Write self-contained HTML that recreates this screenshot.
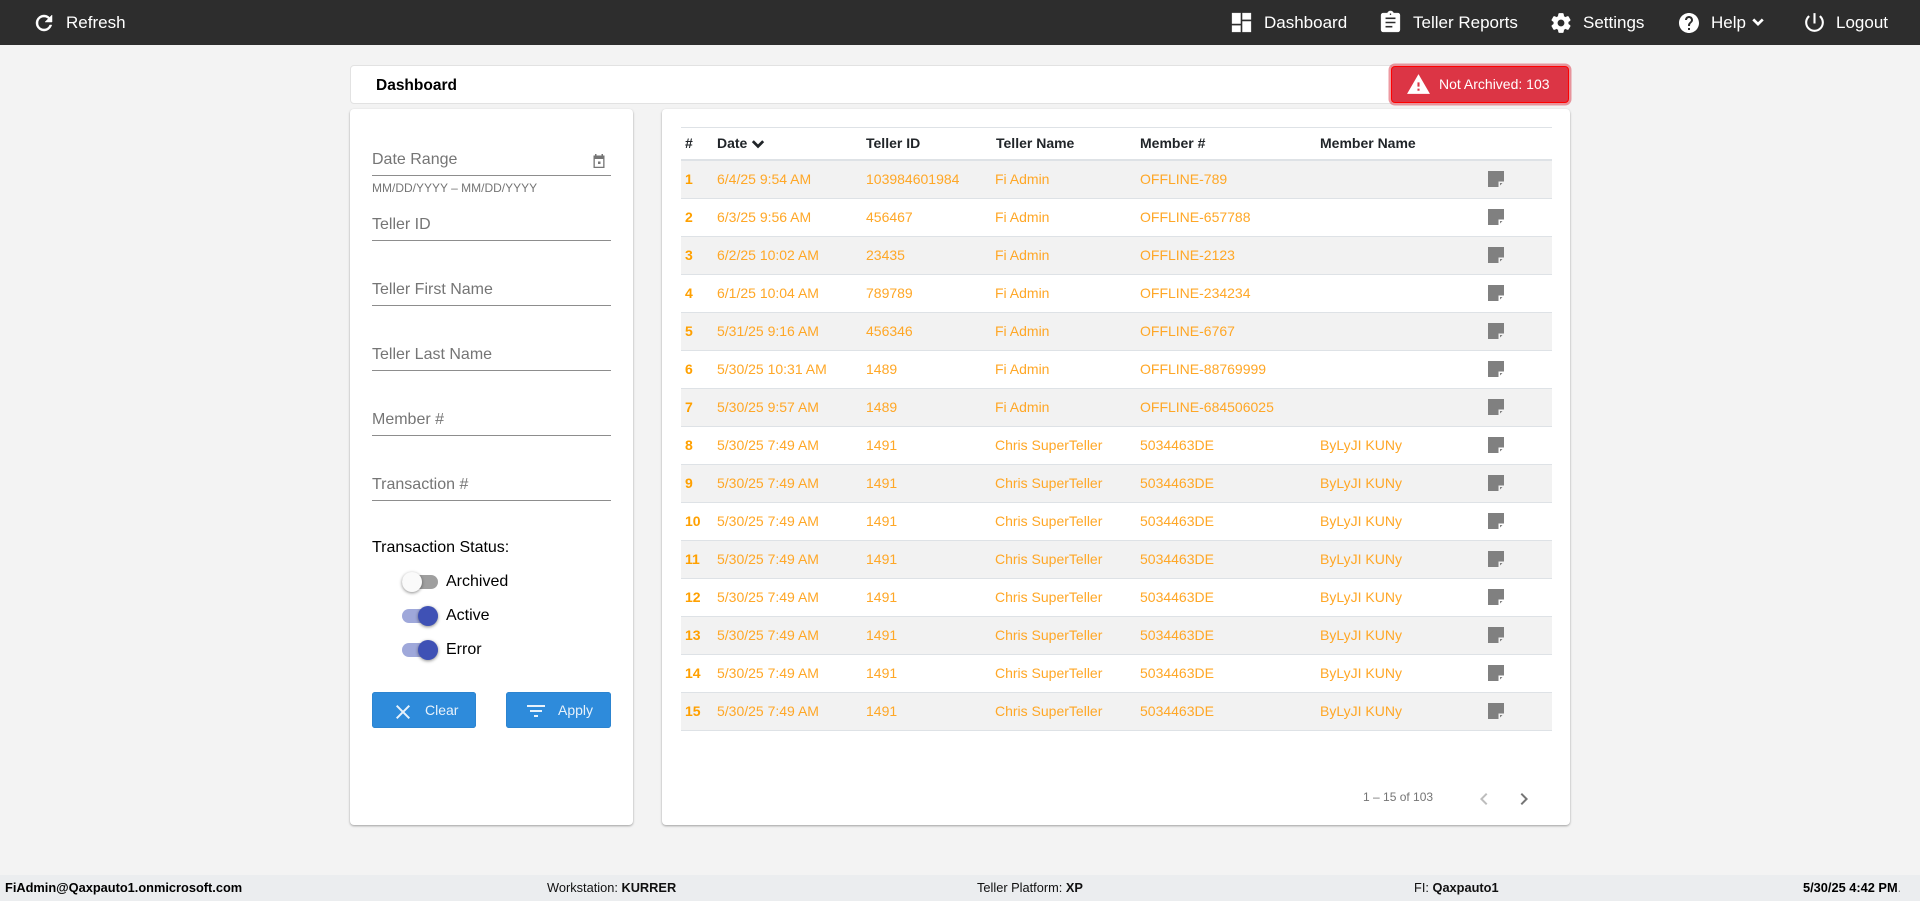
<!DOCTYPE html>
<html lang="en"><head><meta charset="utf-8"><title>Dashboard</title>
<style>
*{box-sizing:border-box}
html,body{margin:0;padding:0}
body{width:1920px;height:901px;overflow:hidden;position:relative;background:#f3f3f3;font-family:"Liberation Sans",Arial,sans-serif;color:#000}
.a{position:absolute;white-space:nowrap}
#nav{left:0;top:0;width:1920px;height:45px;background:#2d2d2d}
.n{color:#fff;font-size:17px;line-height:20px;top:13px}
.i{position:absolute;fill:#fff;stroke:#fff;stroke-width:.5}
#title{left:350px;top:65px;width:1042px;height:39px;background:#fff;border:1px solid #e2e2e2;border-radius:4px 0 0 4px}
#t2{left:376px;top:77px;font-weight:bold;font-size:15.5px;line-height:18px;color:#000}
#alert{left:1391px;top:66px;width:178px;height:37px;background:#dc3545;border:1px solid #f00;border-radius:4px;box-shadow:0 0 0 2.5px rgba(220,53,69,.5)}
#alertT{left:1439px;top:76px;color:#fff;font-size:14px;line-height:17px}
.card{background:#fff;border-radius:4px;box-shadow:0 1px 2px rgba(0,0,0,.35)}
.lb{left:372px;color:#757575;font-size:16px;line-height:20px}
.ul{left:372px;width:239px;height:1px;background:#8d8d8d}
.tr{left:402px;width:36px;height:14px;border-radius:7px}
.th{width:20px;height:20px;border-radius:50%;box-shadow:0 1px 3px rgba(0,0,0,.45)}
.tl{left:446px;font-size:16px;line-height:20px;color:#000}
.btn{top:692px;height:36px;background:#2e8bdb;border-radius:3px;box-shadow:0 0 0 .5px #2a7ec6 inset}
.bt{top:702px;color:#e8f2fb;font-size:14px;line-height:17px}
.h{top:135px;font-weight:bold;font-size:14px;line-height:17px;color:#212529}
.row{position:absolute;left:681px;width:871px;height:38px;border-bottom:1px solid #dee2e6;color:#ffa726;font-size:14px;line-height:37px}
.row.s{background:#f2f2f2}
.row span{position:absolute;top:0;white-space:nowrap}
.row b{position:absolute;top:0;left:4px;color:#ffa000}
.c2{left:36px}.c3{left:185px}.c4{left:314px}.c5{left:459px}.c6{left:639px}
.row svg{position:absolute;left:807px;top:10px}
#foot{left:0;top:875px;width:1920px;height:26px;background:#ebedef}
.f{top:880px;font-size:12.8px;line-height:16px;color:#111}
</style></head><body>

<div class="a" id="nav"></div>
<svg class="i" style="left:32px;top:11px" width="24" height="24" viewBox="0 0 24 24"><path d="M17.65 6.35C16.2 4.9 14.21 4 12 4c-4.42 0-7.99 3.58-7.99 8s3.57 8 7.99 8c3.73 0 6.84-2.55 7.73-6h-2.08c-.82 2.33-3.04 4-5.65 4-3.31 0-6-2.69-6-6s2.69-6 6-6c1.66 0 3.14.69 4.22 1.78L13 11h7V4l-2.35 2.35z"/></svg>
<div class="a n" style="left:66px">Refresh</div>

<svg class="i" style="left:1229px;top:10px" width="25" height="25" viewBox="0 0 24 24"><path d="M3 13h8V3H3v10zm0 8h8v-6H3v6zm10 0h8V11h-8v10zm0-18v6h8V3h-8z"/></svg>
<div class="a n" style="left:1264px">Dashboard</div>
<svg class="i" style="left:1378px;top:10px" width="25" height="25" viewBox="0 0 24 24"><path d="M19 3h-4.18C14.4 1.84 13.3 1 12 1c-1.3 0-2.4.84-2.82 2H5c-1.1 0-2 .9-2 2v14c0 1.1.9 2 2 2h14c1.1 0 2-.9 2-2V5c0-1.1-.9-2-2-2zm-7 0c.55 0 1 .45 1 1s-.45 1-1 1-1-.45-1-1 .45-1 1-1zm2 14H7v-2h7v2zm3-4H7v-2h10v2zm0-4H7V7h10v2z"/></svg>
<div class="a n" style="left:1413px">Teller Reports</div>
<svg class="i" style="left:1549px;top:11px" width="24" height="24" viewBox="0 0 24 24"><path d="M19.14 12.94c.04-.3.06-.61.06-.94 0-.32-.02-.64-.07-.94l2.03-1.58c.18-.14.23-.41.12-.61l-1.92-3.32c-.12-.22-.37-.29-.59-.22l-2.39.96c-.5-.38-1.03-.7-1.62-.94l-.36-2.54c-.04-.24-.24-.41-.48-.41h-3.84c-.24 0-.43.17-.47.41l-.36 2.54c-.59.24-1.13.57-1.62.94l-2.39-.96c-.22-.08-.47 0-.59.22L2.74 8.87c-.12.21-.08.47.12.61l2.03 1.58c-.05.3-.09.63-.09.94s.02.64.07.94l-2.03 1.58c-.18.14-.23.41-.12.61l1.92 3.32c.12.22.37.29.59.22l2.39-.96c.5.38 1.03.7 1.62.94l.36 2.54c.05.24.24.41.48.41h3.84c.24 0 .44-.17.47-.41l.36-2.54c.59-.24 1.13-.56 1.62-.94l2.39.96c.22.08.47 0 .59-.22l1.92-3.32c.12-.22.07-.47-.12-.61l-2.01-1.58zM12 15.6c-1.98 0-3.6-1.62-3.6-3.6s1.62-3.6 3.6-3.6 3.6 1.62 3.6 3.6-1.62 3.6-3.6 3.6z"/></svg>
<div class="a n" style="left:1583px">Settings</div>
<svg class="i" style="left:1677px;top:11px" width="24" height="24" viewBox="0 0 24 24"><path d="M12 2C6.48 2 2 6.48 2 12s4.48 10 10 10 10-4.48 10-10S17.52 2 12 2zm1 17h-2v-2h2v2zm2.07-7.75l-.9.92C13.45 12.9 13 13.5 13 15h-2v-.5c0-1.1.45-2.1 1.17-2.83l1.24-1.26c.37-.36.59-.86.59-1.41 0-1.1-.9-2-2-2s-2 .9-2 2H8c0-2.21 1.79-4 4-4s4 1.79 4 4c0 .88-.36 1.68-.93 2.25z" stroke="none"/></svg>
<div class="a n" style="left:1711px">Help</div>
<svg class="i" style="left:1748px;top:12px" width="20" height="20" viewBox="0 0 24 24"><path d="M7.41 8.59L12 13.17l4.59-4.58L18 10l-6 6-6-6z" stroke-width="1.2"/></svg>
<svg class="i" style="left:1802px;top:10px" width="25" height="25" viewBox="0 0 24 24"><path d="M13 3h-2v10h2V3zm4.83 2.17l-1.42 1.42C17.99 7.86 19 9.81 19 12c0 3.87-3.13 7-7 7s-7-3.13-7-7c0-2.19 1.01-4.14 2.58-5.42L6.17 5.17C4.23 6.82 3 9.26 3 12c0 4.97 4.03 9 9 9s9-4.03 9-9c0-2.74-1.23-5.18-3.17-6.83z" stroke="none"/></svg>
<div class="a n" style="left:1836px">Logout</div>

<div class="a" id="title"></div>
<div class="a" id="t2">Dashboard</div>
<div class="a" id="alert"></div>
<svg class="a" style="left:1406px;top:72px" width="25" height="25" viewBox="0 0 24 24"><path fill="#fff" d="M1 21h22L12 2 1 21zm12-3h-2v-2h2v2zm0-4h-2v-4h2v4z"/></svg>
<div class="a" id="alertT">Not Archived: 103</div>

<div class="a card" style="left:350px;top:109px;width:283px;height:716px"></div>
<div class="a lb" style="top:150px">Date Range</div>
<svg class="a" style="left:591px;top:153px" width="16" height="16" viewBox="0 0 16 16"><path fill="#757575" d="M4 1h1.500v1.500h5V1H12v1.500h1.500V15h-11V2.500H4zM3.800 6v7.700h8.400V6zM7 8.500h2.500V11H7z" fill-rule="evenodd"/></svg>
<div class="a ul" style="top:175px"></div>
<div class="a" style="left:372px;top:181px;font-size:12px;line-height:15px;color:#757575">MM/DD/YYYY – MM/DD/YYYY</div>
<div class="a lb" style="top:215px">Teller ID</div><div class="a ul" style="top:240px"></div>
<div class="a lb" style="top:280px">Teller First Name</div><div class="a ul" style="top:305px"></div>
<div class="a lb" style="top:345px">Teller Last Name</div><div class="a ul" style="top:370px"></div>
<div class="a lb" style="top:410px">Member #</div><div class="a ul" style="top:435px"></div>
<div class="a lb" style="top:475px">Transaction #</div><div class="a ul" style="top:500px"></div>

<div class="a" style="left:372px;top:538px;font-size:16px;line-height:20px">Transaction Status:</div>
<div class="a tr" style="top:575px;background:#9f9f9f"></div><div class="a th" style="left:402px;top:572px;background:#fafafa"></div><div class="a tl" style="top:572px">Archived</div>
<div class="a tr" style="top:609px;background:#9fa8da"></div><div class="a th" style="left:418px;top:606px;background:#3f51b5"></div><div class="a tl" style="top:606px">Active</div>
<div class="a tr" style="top:643px;background:#9fa8da"></div><div class="a th" style="left:418px;top:640px;background:#3f51b5"></div><div class="a tl" style="top:640px">Error</div>

<div class="a btn" style="left:372px;width:104px"></div>
<svg class="a" style="left:391px;top:700px" width="24" height="24" viewBox="0 0 24 24"><path fill="#e8f2fb" d="M19 6.410L17.590 5 12 10.590 6.410 5 5 6.410 10.590 12 5 17.590 6.410 19 12 13.410 17.590 19 19 17.590 13.410 12z"/></svg>
<div class="a bt" style="left:425px">Clear</div>
<div class="a btn" style="left:506px;width:105px"></div>
<svg class="a" style="left:524px;top:699px" width="24" height="24" viewBox="0 0 24 24"><path fill="#e8f2fb" d="M10 18h4v-2h-4v2zM3 6v2h18V6H3zm3 7h12v-2H6v2z"/></svg>
<div class="a bt" style="left:558px">Apply</div>

<div class="a card" style="left:662px;top:109px;width:908px;height:716px"></div>
<div class="a" style="left:681px;top:127px;width:871px;height:1px;background:#dee2e6"></div>
<div class="a" style="left:681px;top:159px;width:871px;height:2px;background:#dee2e6"></div>
<div class="a h" style="left:685px">#</div>
<div class="a h" style="left:717px">Date</div>
<svg class="a" style="left:747px;top:133px" width="22" height="22" viewBox="0 0 24 24"><path fill="#212529" stroke="#212529" d="M7.410 8.590L12 13.170l4.590-4.580L18 10l-6 6-6-6z"/></svg>
<div class="a h" style="left:866px">Teller ID</div>
<div class="a h" style="left:996px">Teller Name</div>
<div class="a h" style="left:1140px">Member #</div>
<div class="a h" style="left:1320px">Member Name</div>

<div class="row s" style="top:161px"><b>1</b><span class="c2">6/4/25 9:54 AM</span><span class="c3">103984601984</span><span class="c4">Fi Admin</span><span class="c5">OFFLINE-789</span><svg width="16" height="16" viewBox="0 0 16 16"><path fill="#808080" d="M0 0h16v10.500h-5.500V16H0z"/><path fill="#808080" d="M12 12h2.500l-2.500 2.500z"/></svg></div>
<div class="row" style="top:199px"><b>2</b><span class="c2">6/3/25 9:56 AM</span><span class="c3">456467</span><span class="c4">Fi Admin</span><span class="c5">OFFLINE-657788</span><svg width="16" height="16" viewBox="0 0 16 16"><path fill="#808080" d="M0 0h16v10.500h-5.500V16H0z"/><path fill="#808080" d="M12 12h2.500l-2.500 2.500z"/></svg></div>
<div class="row s" style="top:237px"><b>3</b><span class="c2">6/2/25 10:02 AM</span><span class="c3">23435</span><span class="c4">Fi Admin</span><span class="c5">OFFLINE-2123</span><svg width="16" height="16" viewBox="0 0 16 16"><path fill="#808080" d="M0 0h16v10.500h-5.500V16H0z"/><path fill="#808080" d="M12 12h2.500l-2.500 2.500z"/></svg></div>
<div class="row" style="top:275px"><b>4</b><span class="c2">6/1/25 10:04 AM</span><span class="c3">789789</span><span class="c4">Fi Admin</span><span class="c5">OFFLINE-234234</span><svg width="16" height="16" viewBox="0 0 16 16"><path fill="#808080" d="M0 0h16v10.500h-5.500V16H0z"/><path fill="#808080" d="M12 12h2.500l-2.500 2.500z"/></svg></div>
<div class="row s" style="top:313px"><b>5</b><span class="c2">5/31/25 9:16 AM</span><span class="c3">456346</span><span class="c4">Fi Admin</span><span class="c5">OFFLINE-6767</span><svg width="16" height="16" viewBox="0 0 16 16"><path fill="#808080" d="M0 0h16v10.500h-5.500V16H0z"/><path fill="#808080" d="M12 12h2.500l-2.500 2.500z"/></svg></div>
<div class="row" style="top:351px"><b>6</b><span class="c2">5/30/25 10:31 AM</span><span class="c3">1489</span><span class="c4">Fi Admin</span><span class="c5">OFFLINE-88769999</span><svg width="16" height="16" viewBox="0 0 16 16"><path fill="#808080" d="M0 0h16v10.500h-5.500V16H0z"/><path fill="#808080" d="M12 12h2.500l-2.500 2.500z"/></svg></div>
<div class="row s" style="top:389px"><b>7</b><span class="c2">5/30/25 9:57 AM</span><span class="c3">1489</span><span class="c4">Fi Admin</span><span class="c5">OFFLINE-684506025</span><svg width="16" height="16" viewBox="0 0 16 16"><path fill="#808080" d="M0 0h16v10.500h-5.500V16H0z"/><path fill="#808080" d="M12 12h2.500l-2.500 2.500z"/></svg></div>
<div class="row" style="top:427px"><b>8</b><span class="c2">5/30/25 7:49 AM</span><span class="c3">1491</span><span class="c4">Chris SuperTeller</span><span class="c5">5034463DE</span><span class="c6">ByLyJI KUNy</span><svg width="16" height="16" viewBox="0 0 16 16"><path fill="#808080" d="M0 0h16v10.500h-5.500V16H0z"/><path fill="#808080" d="M12 12h2.500l-2.500 2.500z"/></svg></div>
<div class="row s" style="top:465px"><b>9</b><span class="c2">5/30/25 7:49 AM</span><span class="c3">1491</span><span class="c4">Chris SuperTeller</span><span class="c5">5034463DE</span><span class="c6">ByLyJI KUNy</span><svg width="16" height="16" viewBox="0 0 16 16"><path fill="#808080" d="M0 0h16v10.500h-5.500V16H0z"/><path fill="#808080" d="M12 12h2.500l-2.500 2.500z"/></svg></div>
<div class="row" style="top:503px"><b>10</b><span class="c2">5/30/25 7:49 AM</span><span class="c3">1491</span><span class="c4">Chris SuperTeller</span><span class="c5">5034463DE</span><span class="c6">ByLyJI KUNy</span><svg width="16" height="16" viewBox="0 0 16 16"><path fill="#808080" d="M0 0h16v10.500h-5.500V16H0z"/><path fill="#808080" d="M12 12h2.500l-2.500 2.500z"/></svg></div>
<div class="row s" style="top:541px"><b>11</b><span class="c2">5/30/25 7:49 AM</span><span class="c3">1491</span><span class="c4">Chris SuperTeller</span><span class="c5">5034463DE</span><span class="c6">ByLyJI KUNy</span><svg width="16" height="16" viewBox="0 0 16 16"><path fill="#808080" d="M0 0h16v10.500h-5.500V16H0z"/><path fill="#808080" d="M12 12h2.500l-2.500 2.500z"/></svg></div>
<div class="row" style="top:579px"><b>12</b><span class="c2">5/30/25 7:49 AM</span><span class="c3">1491</span><span class="c4">Chris SuperTeller</span><span class="c5">5034463DE</span><span class="c6">ByLyJI KUNy</span><svg width="16" height="16" viewBox="0 0 16 16"><path fill="#808080" d="M0 0h16v10.500h-5.500V16H0z"/><path fill="#808080" d="M12 12h2.500l-2.500 2.500z"/></svg></div>
<div class="row s" style="top:617px"><b>13</b><span class="c2">5/30/25 7:49 AM</span><span class="c3">1491</span><span class="c4">Chris SuperTeller</span><span class="c5">5034463DE</span><span class="c6">ByLyJI KUNy</span><svg width="16" height="16" viewBox="0 0 16 16"><path fill="#808080" d="M0 0h16v10.500h-5.500V16H0z"/><path fill="#808080" d="M12 12h2.500l-2.500 2.500z"/></svg></div>
<div class="row" style="top:655px"><b>14</b><span class="c2">5/30/25 7:49 AM</span><span class="c3">1491</span><span class="c4">Chris SuperTeller</span><span class="c5">5034463DE</span><span class="c6">ByLyJI KUNy</span><svg width="16" height="16" viewBox="0 0 16 16"><path fill="#808080" d="M0 0h16v10.500h-5.500V16H0z"/><path fill="#808080" d="M12 12h2.500l-2.500 2.500z"/></svg></div>
<div class="row s" style="top:693px"><b>15</b><span class="c2">5/30/25 7:49 AM</span><span class="c3">1491</span><span class="c4">Chris SuperTeller</span><span class="c5">5034463DE</span><span class="c6">ByLyJI KUNy</span><svg width="16" height="16" viewBox="0 0 16 16"><path fill="#808080" d="M0 0h16v10.500h-5.500V16H0z"/><path fill="#808080" d="M12 12h2.500l-2.500 2.500z"/></svg></div>

<div class="a" style="left:1363px;top:790px;font-size:12px;line-height:15px;color:#757575">1 – 15 of 103</div>
<svg class="a" style="left:1472px;top:787px" width="24" height="24" viewBox="0 0 24 24"><path fill="#bdbdbd" d="M15.410 7.410L14 6l-6 6 6 6 1.410-1.410L10.830 12z"/></svg>
<svg class="a" style="left:1512px;top:787px" width="24" height="24" viewBox="0 0 24 24"><path fill="#757575" d="M10 6L8.590 7.410 13.170 12l-4.580 4.590L10 18l6-6z"/></svg>

<div class="a" id="foot"></div>
<div class="a f" style="left:5px;font-weight:bold;color:#000">FiAdmin@Qaxpauto1.onmicrosoft.com</div>
<div class="a f" style="left:547px">Workstation: <b>KURRER</b></div>
<div class="a f" style="left:977px">Teller Platform: <b>XP</b></div>
<div class="a f" style="left:1414px">FI: <b>Qaxpauto1</b></div>
<div class="a f" style="left:1803px;font-weight:bold;color:#000">5/30/25 4:42 PM<span style="font-weight:normal;color:#888">.</span></div>
</body></html>
